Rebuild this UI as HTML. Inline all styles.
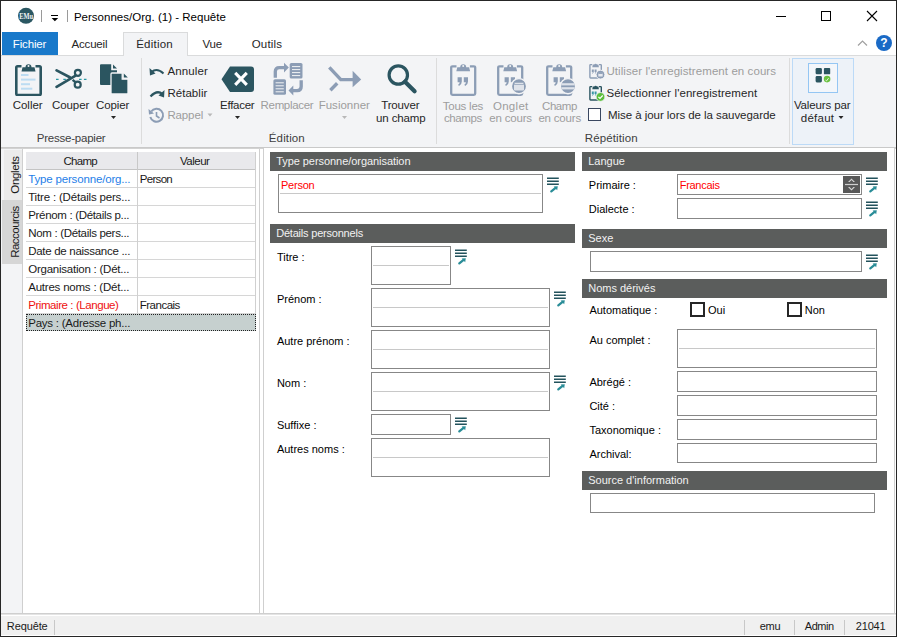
<!DOCTYPE html>
<html><head><meta charset="utf-8"><style>
html,body{margin:0;padding:0;width:897px;height:637px;overflow:hidden;background:#fff}
body{position:relative;font-family:"Liberation Sans",sans-serif}
.t{position:absolute;white-space:nowrap;line-height:1;font-family:"Liberation Sans",sans-serif}
</style></head><body>
<div style="position:absolute;left:0px;top:0px;width:897px;height:637px;background:#ffffff"></div>
<div style="position:absolute;left:1px;top:55px;width:895px;height:93px;background:#f3f4f6;border-top:1px solid #dadbdc;box-sizing:border-box"></div>
<div style="position:absolute;left:1px;top:147px;width:895px;height:1px;background:#c9c9c9"></div>
<div style="position:absolute;left:1px;top:148px;width:895px;height:466px;background:#ffffff"></div>
<div style="position:absolute;left:1px;top:148px;width:21px;height:466px;background:#f3f4f6"></div>
<div style="position:absolute;left:1px;top:613px;width:895px;height:1px;background:#cfcfcf"></div>
<div style="position:absolute;left:1px;top:614px;width:895px;height:1px;background:#e4e4e4"></div>
<div style="position:absolute;left:1px;top:615px;width:895px;height:1px;background:#ffffff"></div>
<div style="position:absolute;left:1px;top:616px;width:895px;height:19px;background:#f0f0f0"></div>
<div style="position:absolute;left:1px;top:635px;width:895px;height:1px;background:#ffffff"></div>
<div style="position:absolute;left:0px;top:0px;width:897px;height:637px;box-sizing:border-box;border:1px solid #262626"></div>
<svg style="position:absolute;left:17px;top:7px" width="18" height="18" viewBox="0 0 18 18"><circle cx="9" cy="8.8" r="8" fill="#2b5762"/><text x="2.2" y="11.6" textLength="13.8" lengthAdjust="spacingAndGlyphs" font-family="Liberation Serif" font-weight="bold" font-size="7.8" fill="#f2f5f6">EMu</text></svg>
<div style="position:absolute;left:41px;top:10px;width:1px;height:12px;background:#9a9a9a"></div>
<div style="position:absolute;left:51px;top:15px;width:7px;height:1px;background:#000"></div>
<svg style="position:absolute;left:51px;top:18px" width="8" height="4"><path d="M0.6 0 H7.2 L3.9 3.2 Z" fill="#000"/></svg>
<div style="position:absolute;left:67px;top:10px;width:1px;height:12px;background:#9a9a9a"></div>
<div style="position:absolute;left:776px;top:16px;width:10px;height:1px;background:#000"></div>
<div style="position:absolute;left:821px;top:11px;width:10px;height:10px;box-sizing:border-box;border:1px solid #000"></div>
<svg style="position:absolute;left:866px;top:10px" width="12" height="12"><path d="M1 1 L11 11 M11 1 L1 11" stroke="#000" stroke-width="1.1"/></svg>
<div style="position:absolute;left:2px;top:32px;width:56px;height:23px;background:#1979ca"></div>
<div style="position:absolute;left:123px;top:32px;width:65px;height:24px;background:#f3f4f6;border:1px solid #dadbdc;border-bottom:none;box-sizing:border-box"></div>
<svg style="position:absolute;left:857px;top:39px" width="11" height="8"><path d="M1 6.5 L5.5 2 L10 6.5" stroke="#a0a0a0" stroke-width="1.2" fill="none"/></svg>
<svg style="position:absolute;left:875px;top:34px" width="18" height="18"><circle cx="9" cy="9" r="8" fill="#1a6ac6"/><text x="9" y="13.3" text-anchor="middle" font-family="Liberation Sans" font-weight="bold" font-size="12" fill="#fff">?</text></svg>
<div style="position:absolute;left:141px;top:58px;width:1px;height:86px;background:#dcdcdc"></div>
<div style="position:absolute;left:436px;top:58px;width:1px;height:86px;background:#dcdcdc"></div>
<div style="position:absolute;left:789px;top:58px;width:1px;height:86px;background:#dcdcdc"></div>
<svg style="position:absolute;left:15px;top:62px" width="28" height="34" viewBox="0 0 28 34">
<path d="M6.5 4.3 H2.6 Q1.3 4.3 1.3 5.6 V31.7 Q1.3 33 2.6 33 H24.4 Q25.7 33 25.7 31.7 V5.6 Q25.7 4.3 24.4 4.3 H20.5" fill="none" stroke="#2b5560" stroke-width="2.6"/>
<path d="M6.5 9.5 L7.5 5.2 H10.5 A3 3 0 0 1 16.5 5.2 H19.5 L20.5 9.5 Z" fill="#2b5560"/><circle cx="13.5" cy="4" r="1" fill="#f3f4f6"/>
<rect x="6" y="12" width="7.5" height="2" fill="#bcdcf2"/><rect x="6" y="16.6" width="14.5" height="2" fill="#bcdcf2"/>
<rect x="6" y="21.2" width="9" height="2" fill="#bcdcf2"/><rect x="6" y="25.7" width="11.3" height="2" fill="#bcdcf2"/>
</svg>
<svg style="position:absolute;left:55px;top:68px" width="32" height="22" viewBox="0 0 32 22">
<path d="M1.6 2.4 L14.8 9.2" stroke="#2b5560" stroke-width="2.7" stroke-linecap="round"/>
<path d="M1.6 18.9 L20.6 7.6" stroke="#2b5560" stroke-width="2.7" stroke-linecap="round"/>
<path d="M17.6 11.8 L20.4 14.2" stroke="#2b5560" stroke-width="2.4"/>
<circle cx="22.9" cy="4.8" r="3" fill="none" stroke="#2b5560" stroke-width="2.2"/>
<circle cx="22.7" cy="16.7" r="3" fill="none" stroke="#2b5560" stroke-width="2.2"/>
<path d="M1 11.4 H3.6 M8.3 11.4 H10.9 M24 11.4 H26.6 M28.9 11.4 H31.5" stroke="#2a98a4" stroke-width="1.1"/>
</svg>
<svg style="position:absolute;left:99px;top:63px" width="31" height="32" viewBox="0 0 31 32">
<path d="M2 1.2 H12.2 V7.2 H18 V21 Q18 22 17 22 H2 Q1 22 1 21 V2.2 Q1 1.2 2 1.2 Z" fill="#2b5560"/>
<path d="M14 1.4 L18 5.4 H14 Z" fill="#2b5560"/>
<path d="M13 10 H23.2 V16.2 H29 V29.9 Q29 30.9 28 30.9 H13 Q12 30.9 12 29.9 V11 Q12 10 13 10 Z" fill="#2b5560" stroke="#f3f4f6" stroke-width="1.3"/>
<path d="M24.8 10.4 L28.8 14.4 H24.8 Z" fill="#2b5560"/>
</svg>
<svg style="position:absolute;left:110px;top:115px" width="7" height="5"><path d="M1 1 L6 1 L3.5 4 Z" fill="#262626"/></svg>
<svg style="position:absolute;left:149px;top:67px" width="16" height="10" viewBox="0 0 16 10">
<path d="M2.5 5 Q8 0.5 14.5 6.5" stroke="#2b5560" stroke-width="2" fill="none"/><path d="M0.5 1 L1 8.5 L6.5 6.5 Z" fill="#2b5560"/></svg>
<svg style="position:absolute;left:149px;top:88.5px" width="16" height="10" viewBox="0 0 16 10">
<path d="M13.5 5 Q8 0.5 1.5 7.5" stroke="#2b5560" stroke-width="2.2" fill="none"/><path d="M15.5 1 L15 8.5 L9.5 6.5 Z" fill="#2b5560"/></svg>
<svg style="position:absolute;left:148px;top:107px" width="17" height="17" viewBox="0 0 17 17">
<path d="M3.2 4.5 A6.5 6.5 0 1 1 2.3 10" stroke="#8c9db5" stroke-width="2" fill="none"/>
<path d="M0.5 2 L1 7.5 L6 6.5 Z" fill="#8c9db5"/><path d="M8.5 5 V9 L11.5 11" stroke="#8c9db5" stroke-width="1.6" fill="none"/></svg>
<svg style="position:absolute;left:207px;top:113px" width="7" height="4"><path d="M0.5 0.5 L5.5 0.5 L3 3.5 Z" fill="#b8b8b8"/></svg>
<svg style="position:absolute;left:221px;top:66px" width="34" height="27" viewBox="0 0 34 27">
<path d="M9 0.5 H30 Q33 0.5 33 3.5 V23 Q33 26 30 26 H9 L0.5 13.25 Z" fill="#2b5560"/>
<path d="M14.2 6.8 L25.8 18.8 M25.8 6.8 L14.2 18.8" stroke="#fff" stroke-width="3.1"/></svg>
<svg style="position:absolute;left:234px;top:115px" width="7" height="5"><path d="M1 1 L6 1 L3.5 4 Z" fill="#262626"/></svg>
<svg style="position:absolute;left:273px;top:62px" width="31" height="34" viewBox="0 0 31 34">
<path d="M2.3 15.8 V9.5 Q2.3 5.6 6.2 5.6 H11.5" stroke="#8c9db5" stroke-width="3.3" fill="none"/><path d="M11 0.8 L15.8 5.6 L11 10.4 Z" fill="#8c9db5"/>
<rect x="16.7" y="1" width="12.8" height="15.6" rx="1.6" fill="#8c9db5"/>
<path d="M19 4.6 H27.2 M19 7.6 H27.2 M19 10.6 H27.2 M19 13.6 H27.2" stroke="#f3f4f6" stroke-width="1"/>
<rect x="0.4" y="17.2" width="12.6" height="15.6" rx="1.6" fill="#8c9db5"/>
<path d="M2.6 20.8 H10.8 M2.6 23.8 H10.8 M2.6 26.8 H10.8 M2.6 29.8 H10.8" stroke="#f3f4f6" stroke-width="1"/>
<path d="M28.2 18.2 V24.5 Q28.2 28.6 24.2 28.6 H19.5" stroke="#8c9db5" stroke-width="3.3" fill="none"/><path d="M20.3 23.6 L15.5 28.6 L20.3 33.6 Z" fill="#8c9db5"/>
</svg>
<svg style="position:absolute;left:328px;top:66px" width="34" height="26" viewBox="0 0 34 26">
<path d="M1.3 1.3 L12.8 13.6 H26" stroke="#8c9db5" stroke-width="3.4" fill="none"/><path d="M2.4 24.2 L9.2 17.3" stroke="#8c9db5" stroke-width="3.4"/>
<path d="M24.6 4.8 L33.2 13.6 L24.6 21.2 Z" fill="#8c9db5"/></svg>
<svg style="position:absolute;left:341px;top:115px" width="7" height="5"><path d="M1 1 L6 1 L3.5 4 Z" fill="#b8b8b8"/></svg>
<svg style="position:absolute;left:386px;top:63px" width="32" height="32" viewBox="0 0 32 32">
<circle cx="12.3" cy="12" r="9.2" fill="none" stroke="#2b5560" stroke-width="3.2"/><path d="M19 18.8 L28.6 28.2" stroke="#2b5560" stroke-width="4.2" stroke-linecap="round"/></svg>
<svg style="position:absolute;left:450px;top:62px" width="34" height="34" viewBox="0 0 34 34">
<path d="M6.5 4.3 H2.6 Q1.2 4.3 1.2 5.6 V31.6 Q1.2 32.8 2.6 32.8 H23.8 Q25.2 32.8 25.2 31.6 V5.6 Q25.2 4.3 23.8 4.3 H19.9" fill="none" stroke="#8c9db5" stroke-width="2.3"/>
<path d="M6.3 9.3 L7.3 5.2 H10.2 A3 3 0 0 1 16.2 5.2 H19.1 L20.1 9.3 Z" fill="#8c9db5"/><circle cx="13.2" cy="4" r="1" fill="#f3f4f6"/>
<path d="M7.6 15.2 h4.2 v4.3 q0 3.2 -2.8 4.5 l-0.9 -1.2 q1.5 -0.9 1.6 -2.6 h-2.1z M13.8 15.2 h4.2 v4.3 q0 3.2 -2.8 4.5 l-0.9 -1.2 q1.5 -0.9 1.6 -2.6 h-2.1z" fill="#8c9db5"/>
</svg>
<svg style="position:absolute;left:497px;top:62px" width="34" height="34" viewBox="0 0 34 34">
<path d="M6.5 4.3 H2.6 Q1.2 4.3 1.2 5.6 V31.6 Q1.2 32.8 2.6 32.8 H23.8 Q25.2 32.8 25.2 31.6 V5.6 Q25.2 4.3 23.8 4.3 H19.9" fill="none" stroke="#8c9db5" stroke-width="2.3"/>
<path d="M6.3 9.3 L7.3 5.2 H10.2 A3 3 0 0 1 16.2 5.2 H19.1 L20.1 9.3 Z" fill="#8c9db5"/><circle cx="13.2" cy="4" r="1" fill="#f3f4f6"/>
<path d="M7.6 15.2 h4.2 v4.3 q0 3.2 -2.8 4.5 l-0.9 -1.2 q1.5 -0.9 1.6 -2.6 h-2.1z M13.8 15.2 h4.2 v4.3 q0 3.2 -2.8 4.5 l-0.9 -1.2 q1.5 -0.9 1.6 -2.6 h-2.1z" fill="#8c9db5"/>
<circle cx="22" cy="24.2" r="7.6" fill="#8c9db5" stroke="#f3f4f6" stroke-width="1.4"/><rect x="17" y="20.5" width="10" height="8" rx="0.8" fill="#dfe3ea"/><rect x="17" y="20.5" width="10" height="2.2" fill="#8c9db5"/><rect x="17.6" y="21" width="8.8" height="1" fill="#dfe3ea"/></svg>
<svg style="position:absolute;left:546px;top:62px" width="34" height="34" viewBox="0 0 34 34">
<path d="M6.5 4.3 H2.6 Q1.2 4.3 1.2 5.6 V31.6 Q1.2 32.8 2.6 32.8 H23.8 Q25.2 32.8 25.2 31.6 V5.6 Q25.2 4.3 23.8 4.3 H19.9" fill="none" stroke="#8c9db5" stroke-width="2.3"/>
<path d="M6.3 9.3 L7.3 5.2 H10.2 A3 3 0 0 1 16.2 5.2 H19.1 L20.1 9.3 Z" fill="#8c9db5"/><circle cx="13.2" cy="4" r="1" fill="#f3f4f6"/>
<path d="M7.6 15.2 h4.2 v4.3 q0 3.2 -2.8 4.5 l-0.9 -1.2 q1.5 -0.9 1.6 -2.6 h-2.1z M13.8 15.2 h4.2 v4.3 q0 3.2 -2.8 4.5 l-0.9 -1.2 q1.5 -0.9 1.6 -2.6 h-2.1z" fill="#8c9db5"/>
<circle cx="22" cy="24.2" r="7.6" fill="#8c9db5" stroke="#f3f4f6" stroke-width="1.4"/><rect x="15.5" y="21.2" width="13" height="2.2" fill="#dfe3ea"/><rect x="15.5" y="25.2" width="13" height="2.2" fill="#dfe3ea"/></svg>
<svg style="position:absolute;left:589px;top:62px" width="17" height="18" viewBox="0 0 17 18">
<path d="M3.2 2.6 H1.6 Q0.9 2.6 0.9 3.3 V15.3 Q0.9 16 1.6 16 H11.6 Q12.3 16 12.3 15.3 V3.3 Q12.3 2.6 11.6 2.6 H10" fill="none" stroke="#8c9db5" stroke-width="1.4"/>
<path d="M3.3 5.2 L3.8 2.6 H5.2 A1.5 1.5 0 0 1 8 2.6 H9.4 L9.9 5.2 Z" fill="#8c9db5"/>
<path d="M2.8 7.5 h2 v2 q0 1.6 -1.4 2.2 l-0.4 -0.6 q0.7 -0.4 0.8 -1.2 h-1z M5.6 7.5 h2 v2 q0 1.6 -1.4 2.2 l-0.4 -0.6 q0.7 -0.4 0.8 -1.2 h-1z" fill="#8c9db5"/>
<circle cx="11.5" cy="12.6" r="4.4" fill="#8c9db5" stroke="#f3f4f6" stroke-width="1"/><rect x="9.3" y="10.9" width="4.4" height="3.6" fill="#e6e9ef"/><rect x="9.3" y="10.9" width="4.4" height="1" fill="#8c9db5"/></svg>
<svg style="position:absolute;left:589px;top:84px" width="17" height="18" viewBox="0 0 17 18">
<path d="M3.2 2.6 H1.6 Q0.9 2.6 0.9 3.3 V15.3 Q0.9 16 1.6 16 H11.6 Q12.3 16 12.3 15.3 V3.3 Q12.3 2.6 11.6 2.6 H10" fill="none" stroke="#2b5560" stroke-width="1.4"/>
<path d="M3.3 5.2 L3.8 2.6 H5.2 A1.5 1.5 0 0 1 8 2.6 H9.4 L9.9 5.2 Z" fill="#2b5560"/>
<path d="M2.8 7.5 h2 v2 q0 1.6 -1.4 2.2 l-0.4 -0.6 q0.7 -0.4 0.8 -1.2 h-1z M5.6 7.5 h2 v2 q0 1.6 -1.4 2.2 l-0.4 -0.6 q0.7 -0.4 0.8 -1.2 h-1z" fill="#3a98a6"/>
<circle cx="11.5" cy="12.9" r="4.4" fill="#5cbf3c" stroke="#f3f4f6" stroke-width="0.8"/><path d="M9.4 12.9 L11 14.5 L13.7 11.5" stroke="#fff" stroke-width="1.2" fill="none"/></svg>
<div style="position:absolute;left:588px;top:108px;width:13px;height:13px;box-sizing:border-box;border:1px solid #3a4760;background:#fff"></div>
<div style="position:absolute;left:792px;top:58px;width:62px;height:87px;box-sizing:border-box;border:1px solid #bcdaf7;background:#edf2f8"></div>
<div style="position:absolute;left:808px;top:63px;width:30px;height:30px;box-sizing:border-box;border:1px solid #94c6f3;background:#f3f6fa"></div>
<svg style="position:absolute;left:815px;top:67px" width="16" height="16" viewBox="0 0 16 16">
<rect x="0.6" y="1" width="6.3" height="6.3" rx="1.3" fill="#2b5560"/><rect x="8.9" y="1" width="6.3" height="6.3" rx="0.9" fill="#2b5560"/>
<rect x="0.6" y="9.1" width="6.3" height="6.3" rx="1.3" fill="#2b5560"/><circle cx="12.1" cy="12.1" r="3.3" fill="#69c13f"/>
<path d="M10.6 13.2 L11.5 13.9 L13.6 11.2" stroke="#f4f9f0" stroke-width="0.9" fill="none"/></svg>
<svg style="position:absolute;left:838px;top:115px" width="7" height="5"><path d="M0.5 1 L5.5 1 L3 4 Z" fill="#262626"/></svg>
<div style="position:absolute;left:4px;top:150px;width:18px;height:50px;background:#ebebeb"></div>
<div style="position:absolute;left:2px;top:200px;width:20px;height:64px;background:#d6d6d6"></div>
<div style="position:absolute;left:22px;top:148px;width:238px;height:465px;box-sizing:border-box;border:1px solid #cfcfcf;border-top:none;border-bottom:none;background:#fff"></div>
<div style="position:absolute;left:1px;top:148px;width:895px;height:1px;background:#d2d2d2"></div>
<div style="position:absolute;left:26px;top:152px;width:230px;height:18px;background:#e9e9ec;border-bottom:1px solid #c4c4c4;box-sizing:border-box"></div>
<div style="position:absolute;left:137px;top:152px;width:1px;height:18px;background:#c8c8c8"></div>
<div style="position:absolute;left:26px;top:187px;width:230px;height:1px;background:#d6d6d6"></div>
<div style="position:absolute;left:26px;top:205px;width:230px;height:1px;background:#d6d6d6"></div>
<div style="position:absolute;left:26px;top:223px;width:230px;height:1px;background:#d6d6d6"></div>
<div style="position:absolute;left:26px;top:241px;width:230px;height:1px;background:#d6d6d6"></div>
<div style="position:absolute;left:26px;top:259px;width:230px;height:1px;background:#d6d6d6"></div>
<div style="position:absolute;left:26px;top:277px;width:230px;height:1px;background:#d6d6d6"></div>
<div style="position:absolute;left:26px;top:295px;width:230px;height:1px;background:#d6d6d6"></div>
<div style="position:absolute;left:26px;top:313px;width:230px;height:1px;background:#d6d6d6"></div>
<div style="position:absolute;left:137px;top:170px;width:1px;height:144px;background:#d0d0d0"></div>
<div style="position:absolute;left:255px;top:152px;width:1px;height:162px;background:#d0d0d0"></div>
<div style="position:absolute;left:26px;top:314px;width:230px;height:17px;background:#c6d0cf;outline:1px dotted #222;outline-offset:-1px"></div>
<div style="position:absolute;left:263px;top:148px;width:632px;height:465px;box-sizing:border-box;border:1px solid #cfcfcf;border-top:none;border-bottom:none;background:#fff"></div>
<div style="position:absolute;left:270px;top:152px;width:305px;height:19px;background:#5b5d5c"></div>
<div style="position:absolute;left:278px;top:174px;width:265px;height:39px;box-sizing:border-box;border:1px solid #878787;background:#fff"></div>
<div style="position:absolute;left:280px;top:193px;width:261px;height:1px;background:#c8c8c8"></div>
<svg style="position:absolute;left:546px;top:177px" width="13" height="16" viewBox="0 0 13 16">
<path d="M1 1.2 H12.8 M1 4.3 H12.8 M1 7.3 H12.8" stroke="#22525c" stroke-width="1.4"/>
<path d="M5.3 14.3 L9.6 10.9" stroke="#2a8d98" stroke-width="2.3" stroke-linecap="round"/><path d="M7.6 9.6 L11.8 9.3 L11.2 13.2 Z" fill="#2a8d98"/></svg>
<div style="position:absolute;left:270px;top:224px;width:305px;height:19px;background:#5b5d5c"></div>
<div style="position:absolute;left:371px;top:246px;width:80px;height:39px;box-sizing:border-box;border:1px solid #878787;background:#fff"></div>
<div style="position:absolute;left:373px;top:265px;width:76px;height:1px;background:#c8c8c8"></div>
<svg style="position:absolute;left:454px;top:249px" width="13" height="16" viewBox="0 0 13 16">
<path d="M1 1.2 H12.8 M1 4.3 H12.8 M1 7.3 H12.8" stroke="#22525c" stroke-width="1.4"/>
<path d="M5.3 14.3 L9.6 10.9" stroke="#2a8d98" stroke-width="2.3" stroke-linecap="round"/><path d="M7.6 9.6 L11.8 9.3 L11.2 13.2 Z" fill="#2a8d98"/></svg>
<div style="position:absolute;left:371px;top:288px;width:179px;height:39px;box-sizing:border-box;border:1px solid #878787;background:#fff"></div>
<div style="position:absolute;left:373px;top:307px;width:175px;height:1px;background:#c8c8c8"></div>
<svg style="position:absolute;left:553px;top:291px" width="13" height="16" viewBox="0 0 13 16">
<path d="M1 1.2 H12.8 M1 4.3 H12.8 M1 7.3 H12.8" stroke="#22525c" stroke-width="1.4"/>
<path d="M5.3 14.3 L9.6 10.9" stroke="#2a8d98" stroke-width="2.3" stroke-linecap="round"/><path d="M7.6 9.6 L11.8 9.3 L11.2 13.2 Z" fill="#2a8d98"/></svg>
<div style="position:absolute;left:371px;top:330px;width:179px;height:39px;box-sizing:border-box;border:1px solid #878787;background:#fff"></div>
<div style="position:absolute;left:373px;top:349px;width:175px;height:1px;background:#c8c8c8"></div>
<div style="position:absolute;left:371px;top:372px;width:179px;height:39px;box-sizing:border-box;border:1px solid #878787;background:#fff"></div>
<div style="position:absolute;left:373px;top:391px;width:175px;height:1px;background:#c8c8c8"></div>
<svg style="position:absolute;left:553px;top:375px" width="13" height="16" viewBox="0 0 13 16">
<path d="M1 1.2 H12.8 M1 4.3 H12.8 M1 7.3 H12.8" stroke="#22525c" stroke-width="1.4"/>
<path d="M5.3 14.3 L9.6 10.9" stroke="#2a8d98" stroke-width="2.3" stroke-linecap="round"/><path d="M7.6 9.6 L11.8 9.3 L11.2 13.2 Z" fill="#2a8d98"/></svg>
<div style="position:absolute;left:371px;top:414px;width:80px;height:21px;box-sizing:border-box;border:1px solid #878787;background:#fff"></div>
<svg style="position:absolute;left:454px;top:417px" width="13" height="16" viewBox="0 0 13 16">
<path d="M1 1.2 H12.8 M1 4.3 H12.8 M1 7.3 H12.8" stroke="#22525c" stroke-width="1.4"/>
<path d="M5.3 14.3 L9.6 10.9" stroke="#2a8d98" stroke-width="2.3" stroke-linecap="round"/><path d="M7.6 9.6 L11.8 9.3 L11.2 13.2 Z" fill="#2a8d98"/></svg>
<div style="position:absolute;left:371px;top:438px;width:179px;height:39px;box-sizing:border-box;border:1px solid #878787;background:#fff"></div>
<div style="position:absolute;left:373px;top:457px;width:175px;height:1px;background:#c8c8c8"></div>
<div style="position:absolute;left:582px;top:152px;width:305px;height:19px;background:#5b5d5c"></div>
<div style="position:absolute;left:677px;top:174px;width:185px;height:21px;box-sizing:border-box;border:1px solid #878787;background:#fff"></div>
<div style="position:absolute;left:843px;top:176px;width:17px;height:17px;background:#585858"></div>
<svg style="position:absolute;left:843px;top:176px" width="17" height="17"><path d="M5 6 L8.5 2.5 L12 6 Z M5 11 L8.5 14.5 L12 11 Z" fill="#d6d6d6"/><path d="M6.6 6 L8.5 4.1 L10.4 6 Z M6.6 11 L8.5 12.9 L10.4 11 Z" fill="#585858"/><path d="M2 8.5 H15" stroke="#cfcfcf" stroke-width="1.2"/></svg>
<svg style="position:absolute;left:865px;top:177px" width="13" height="16" viewBox="0 0 13 16">
<path d="M1 1.2 H12.8 M1 4.3 H12.8 M1 7.3 H12.8" stroke="#22525c" stroke-width="1.4"/>
<path d="M5.3 14.3 L9.6 10.9" stroke="#2a8d98" stroke-width="2.3" stroke-linecap="round"/><path d="M7.6 9.6 L11.8 9.3 L11.2 13.2 Z" fill="#2a8d98"/></svg>
<div style="position:absolute;left:677px;top:198px;width:185px;height:21px;box-sizing:border-box;border:1px solid #878787;background:#fff"></div>
<svg style="position:absolute;left:865px;top:201px" width="13" height="16" viewBox="0 0 13 16">
<path d="M1 1.2 H12.8 M1 4.3 H12.8 M1 7.3 H12.8" stroke="#22525c" stroke-width="1.4"/>
<path d="M5.3 14.3 L9.6 10.9" stroke="#2a8d98" stroke-width="2.3" stroke-linecap="round"/><path d="M7.6 9.6 L11.8 9.3 L11.2 13.2 Z" fill="#2a8d98"/></svg>
<div style="position:absolute;left:582px;top:229px;width:305px;height:19px;background:#5b5d5c"></div>
<div style="position:absolute;left:590px;top:251px;width:272px;height:21px;box-sizing:border-box;border:1px solid #878787;background:#fff"></div>
<svg style="position:absolute;left:865px;top:254px" width="13" height="16" viewBox="0 0 13 16">
<path d="M1 1.2 H12.8 M1 4.3 H12.8 M1 7.3 H12.8" stroke="#22525c" stroke-width="1.4"/>
<path d="M5.3 14.3 L9.6 10.9" stroke="#2a8d98" stroke-width="2.3" stroke-linecap="round"/><path d="M7.6 9.6 L11.8 9.3 L11.2 13.2 Z" fill="#2a8d98"/></svg>
<div style="position:absolute;left:582px;top:279px;width:305px;height:19px;background:#5b5d5c"></div>
<div style="position:absolute;left:690px;top:302px;width:15px;height:15px;box-sizing:border-box;border:2px solid #262626;background:#fff"></div>
<div style="position:absolute;left:787px;top:302px;width:15px;height:15px;box-sizing:border-box;border:2px solid #262626;background:#fff"></div>
<div style="position:absolute;left:677px;top:329px;width:200px;height:39px;box-sizing:border-box;border:1px solid #878787;background:#fff"></div>
<div style="position:absolute;left:679px;top:348px;width:196px;height:1px;background:#c8c8c8"></div>
<div style="position:absolute;left:677px;top:371px;width:200px;height:21px;box-sizing:border-box;border:1px solid #878787;background:#fff"></div>
<div style="position:absolute;left:677px;top:395px;width:200px;height:21px;box-sizing:border-box;border:1px solid #878787;background:#fff"></div>
<div style="position:absolute;left:677px;top:419px;width:200px;height:21px;box-sizing:border-box;border:1px solid #878787;background:#fff"></div>
<div style="position:absolute;left:677px;top:443px;width:200px;height:20px;box-sizing:border-box;border:1px solid #878787;background:#fff"></div>
<div style="position:absolute;left:582px;top:471px;width:305px;height:19px;background:#5b5d5c"></div>
<div style="position:absolute;left:590px;top:493px;width:285px;height:20px;box-sizing:border-box;border:1px solid #878787;background:#fff"></div>
<div style="position:absolute;left:54px;top:620px;width:1px;height:15px;background:#c8c8c8"></div>
<div style="position:absolute;left:744px;top:620px;width:1px;height:15px;background:#c8c8c8"></div>
<div style="position:absolute;left:794px;top:620px;width:1px;height:15px;background:#c8c8c8"></div>
<div style="position:absolute;left:844px;top:620px;width:1px;height:15px;background:#c8c8c8"></div>
<div class="t" id="t0" style="left:73.90px;top:12.00px;font-size:11.5px;color:#000;letter-spacing:0.018px;">Personnes/Org. (1) - Requête</div>
<div class="t" id="t1" style="left:12.80px;top:39.00px;font-size:11.5px;color:#ffffff;letter-spacing:-0.159px;">Fichier</div>
<div class="t" id="t2" style="left:71.60px;top:39.00px;font-size:11.5px;color:#262626;letter-spacing:-0.197px;">Accueil</div>
<div class="t" id="t3" style="left:136.20px;top:39.00px;font-size:11.5px;color:#262626;letter-spacing:0.233px;">Édition</div>
<div class="t" id="t4" style="left:202.40px;top:39.00px;font-size:11.5px;color:#262626;letter-spacing:-0.149px;">Vue</div>
<div class="t" id="t5" style="left:251.70px;top:39.00px;font-size:11.5px;color:#262626;letter-spacing:0.182px;">Outils</div>
<div class="t" id="t6" style="left:12.70px;top:100.00px;font-size:11.5px;color:#262626;letter-spacing:-0.008px;">Coller</div>
<div class="t" id="t7" style="left:52.00px;top:100.00px;font-size:11.5px;color:#262626;letter-spacing:-0.086px;">Couper</div>
<div class="t" id="t8" style="left:95.90px;top:100.00px;font-size:11.5px;color:#262626;letter-spacing:-0.065px;">Copier</div>
<div class="t" id="t9" style="left:36.80px;top:133.00px;font-size:11.5px;color:#404040;letter-spacing:-0.230px;">Presse-papier</div>
<div class="t" id="t10" style="left:167.40px;top:66.00px;font-size:11.5px;color:#262626;letter-spacing:0.151px;">Annuler</div>
<div class="t" id="t11" style="left:167.40px;top:88.00px;font-size:11.5px;color:#262626;letter-spacing:0.045px;">Rétablir</div>
<div class="t" id="t12" style="left:167.40px;top:110.00px;font-size:11.5px;color:#9d9d9d;letter-spacing:-0.126px;">Rappel</div>
<div class="t" id="t13" style="left:220.00px;top:100.00px;font-size:11.5px;color:#262626;letter-spacing:-0.262px;">Effacer</div>
<div class="t" id="t14" style="left:260.60px;top:100.00px;font-size:11.5px;color:#9d9d9d;letter-spacing:-0.334px;">Remplacer</div>
<div class="t" id="t15" style="left:318.70px;top:100.00px;font-size:11.5px;color:#9d9d9d;letter-spacing:0.007px;">Fusionner</div>
<div class="t" id="t16" style="left:381.20px;top:100.00px;font-size:11.5px;color:#262626;letter-spacing:-0.143px;">Trouver</div>
<div class="t" id="t17" style="left:376.10px;top:113.00px;font-size:11.5px;color:#262626;letter-spacing:-0.127px;">un champ</div>
<div class="t" id="t18" style="left:268.80px;top:133.00px;font-size:11.5px;color:#404040;letter-spacing:0.133px;">Édition</div>
<div class="t" id="t19" style="left:442.70px;top:101.00px;font-size:11.5px;color:#9d9d9d;letter-spacing:-0.223px;">Tous les</div>
<div class="t" id="t20" style="left:444.00px;top:113.00px;font-size:11.5px;color:#9d9d9d;letter-spacing:-0.397px;">champs</div>
<div class="t" id="t21" style="left:492.90px;top:101.00px;font-size:11.5px;color:#9d9d9d;letter-spacing:0.302px;">Onglet</div>
<div class="t" id="t22" style="left:489.20px;top:113.00px;font-size:11.5px;color:#9d9d9d;letter-spacing:-0.176px;">en cours</div>
<div class="t" id="t23" style="left:542.00px;top:101.00px;font-size:11.5px;color:#9d9d9d;letter-spacing:-0.416px;">Champ</div>
<div class="t" id="t24" style="left:538.40px;top:113.00px;font-size:11.5px;color:#9d9d9d;letter-spacing:-0.189px;">en cours</div>
<div class="t" id="t25" style="left:606.40px;top:66.00px;font-size:11.5px;color:#9d9d9d;letter-spacing:0.077px;">Utiliser l&#x27;enregistrement en cours</div>
<div class="t" id="t26" style="left:606.40px;top:88.00px;font-size:11.5px;color:#262626;letter-spacing:0.076px;">Sélectionner l&#x27;enregistrement</div>
<div class="t" id="t27" style="left:608.10px;top:110.00px;font-size:11.5px;color:#262626;letter-spacing:-0.058px;">Mise à jour lors de la sauvegarde</div>
<div class="t" id="t28" style="left:584.80px;top:133.00px;font-size:11.5px;color:#404040;letter-spacing:0.120px;">Répétition</div>
<div class="t" id="t29" style="left:793.90px;top:100.00px;font-size:11.5px;color:#262626;letter-spacing:-0.115px;">Valeurs par</div>
<div class="t" id="t30" style="left:800.80px;top:113.00px;font-size:11.5px;color:#262626;letter-spacing:0.253px;">défaut</div>
<div style="position:absolute;left:15.8px;top:174.7px;width:0;height:0"><div class="t" style="font-size:11.5px;color:#1a1a1a;letter-spacing:-0.306px;transform:translate(-50%,-50%) rotate(-90deg);position:absolute;left:0;top:0;line-height:1">Onglets</div></div>
<div style="position:absolute;left:15.8px;top:231.5px;width:0;height:0"><div class="t" style="font-size:11.5px;color:#1a1a1a;letter-spacing:-0.529px;transform:translate(-50%,-50%) rotate(-90deg);position:absolute;left:0;top:0;line-height:1">Raccourcis</div></div>
<div class="t" id="t33" style="left:63.50px;top:156.00px;font-size:11.5px;color:#1a1a1a;letter-spacing:-0.716px;">Champ</div>
<div class="t" id="t34" style="left:179.90px;top:156.00px;font-size:11.5px;color:#1a1a1a;letter-spacing:-0.482px;">Valeur</div>
<div class="t" id="t35" style="left:28.20px;top:174.00px;font-size:11.5px;color:#1e7ee8;letter-spacing:-0.164px;">Type personne/org...</div>
<div class="t" id="t36" style="left:139.70px;top:174.00px;font-size:11.5px;color:#1a1a1a;letter-spacing:-0.673px;">Person</div>
<div class="t" id="t37" style="left:28.20px;top:192.00px;font-size:11.5px;color:#1a1a1a;letter-spacing:-0.179px;">Titre : (Détails pers...</div>
<div class="t" id="t38" style="left:28.20px;top:210.00px;font-size:11.5px;color:#1a1a1a;letter-spacing:-0.319px;">Prénom : (Détails p...</div>
<div class="t" id="t39" style="left:28.20px;top:228.00px;font-size:11.5px;color:#1a1a1a;letter-spacing:-0.318px;">Nom : (Détails pers...</div>
<div class="t" id="t40" style="left:28.20px;top:246.00px;font-size:11.5px;color:#1a1a1a;letter-spacing:-0.288px;">Date de naissance ...</div>
<div class="t" id="t41" style="left:28.20px;top:264.00px;font-size:11.5px;color:#1a1a1a;letter-spacing:-0.232px;">Organisation : (Dét...</div>
<div class="t" id="t42" style="left:28.20px;top:282.00px;font-size:11.5px;color:#1a1a1a;letter-spacing:-0.212px;">Autres noms : (Dét...</div>
<div class="t" id="t43" style="left:28.20px;top:300.00px;font-size:11.5px;color:#ee1111;letter-spacing:-0.428px;">Primaire : (Langue)</div>
<div class="t" id="t44" style="left:139.70px;top:300.00px;font-size:11.5px;color:#1a1a1a;letter-spacing:-0.489px;">Francais</div>
<div class="t" id="t45" style="left:28.20px;top:318.00px;font-size:11.5px;color:#1a1a1a;letter-spacing:-0.226px;">Pays : (Adresse ph...</div>
<div class="t" id="t46" style="left:276.20px;top:156.00px;font-size:11px;color:#f2f2f2;letter-spacing:-0.056px;">Type personne/organisation</div>
<div class="t" id="t47" style="left:281.00px;top:180.00px;font-size:11px;color:#ff0000;letter-spacing:-0.227px;">Person</div>
<div class="t" id="t48" style="left:276.20px;top:228.00px;font-size:11px;color:#f2f2f2;letter-spacing:-0.206px;">Détails personnels</div>
<div class="t" id="t49" style="left:276.90px;top:252.00px;font-size:11px;color:#000000;letter-spacing:0.000px;">Titre :</div>
<div class="t" id="t50" style="left:276.90px;top:294.00px;font-size:11px;color:#000000;letter-spacing:0.000px;">Prénom :</div>
<div class="t" id="t51" style="left:276.90px;top:336.00px;font-size:11px;color:#000000;letter-spacing:0.000px;">Autre prénom :</div>
<div class="t" id="t52" style="left:276.90px;top:378.00px;font-size:11px;color:#000000;letter-spacing:0.000px;">Nom :</div>
<div class="t" id="t53" style="left:276.90px;top:420.00px;font-size:11px;color:#000000;letter-spacing:0.000px;">Suffixe :</div>
<div class="t" id="t54" style="left:276.90px;top:444.00px;font-size:11px;color:#000000;letter-spacing:0.000px;">Autres noms :</div>
<div class="t" id="t55" style="left:588.20px;top:156.00px;font-size:11px;color:#f2f2f2;letter-spacing:0.000px;">Langue</div>
<div class="t" id="t56" style="left:588.80px;top:180.00px;font-size:11px;color:#000000;letter-spacing:0.000px;">Primaire :</div>
<div class="t" id="t57" style="left:679.70px;top:180.00px;font-size:11px;color:#ff0000;letter-spacing:-0.273px;">Francais</div>
<div class="t" id="t58" style="left:588.80px;top:204.00px;font-size:11px;color:#000000;letter-spacing:0.000px;">Dialecte :</div>
<div class="t" id="t59" style="left:588.20px;top:233.00px;font-size:11px;color:#f2f2f2;letter-spacing:0.000px;">Sexe</div>
<div class="t" id="t60" style="left:588.20px;top:283.00px;font-size:11px;color:#f2f2f2;letter-spacing:0.000px;">Noms dérivés</div>
<div class="t" id="t61" style="left:589.40px;top:305.00px;font-size:11px;color:#000000;letter-spacing:0.000px;">Automatique :</div>
<div class="t" id="t62" style="left:708.00px;top:305.00px;font-size:11px;color:#000000;letter-spacing:0.000px;">Oui</div>
<div class="t" id="t63" style="left:804.70px;top:305.00px;font-size:11px;color:#000000;letter-spacing:0.000px;">Non</div>
<div class="t" id="t64" style="left:589.40px;top:335.00px;font-size:11px;color:#000000;letter-spacing:0.000px;">Au complet :</div>
<div class="t" id="t65" style="left:589.40px;top:377.00px;font-size:11px;color:#000000;letter-spacing:0.000px;">Abrégé :</div>
<div class="t" id="t66" style="left:589.40px;top:401.00px;font-size:11px;color:#000000;letter-spacing:0.000px;">Cité :</div>
<div class="t" id="t67" style="left:589.40px;top:425.00px;font-size:11px;color:#000000;letter-spacing:0.000px;">Taxonomique :</div>
<div class="t" id="t68" style="left:589.40px;top:449.00px;font-size:11px;color:#000000;letter-spacing:0.000px;">Archival:</div>
<div class="t" id="t69" style="left:588.20px;top:475.00px;font-size:11px;color:#f2f2f2;letter-spacing:0.000px;">Source d&#x27;information</div>
<div class="t" id="t70" style="left:6.80px;top:621.00px;font-size:11px;color:#1a1a1a;letter-spacing:-0.113px;">Requête</div>
<div class="t" id="t71" style="left:759.70px;top:621.00px;font-size:11px;color:#1a1a1a;letter-spacing:-0.202px;">emu</div>
<div class="t" id="t72" style="left:804.80px;top:621.00px;font-size:11px;color:#1a1a1a;letter-spacing:-0.477px;">Admin</div>
<div class="t" id="t73" style="left:855.80px;top:621.00px;font-size:11px;color:#1a1a1a;letter-spacing:-0.199px;">21041</div>
</body></html>
